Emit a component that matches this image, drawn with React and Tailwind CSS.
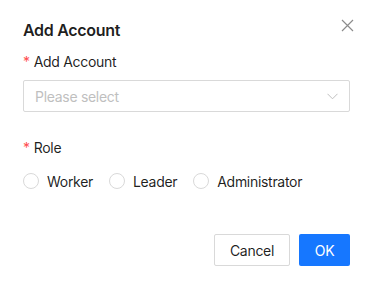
import React from 'react';

const roles = ['Worker', 'Leader', 'Administrator'];

const Label = ({ children }) => (
  <div className="flex items-center h-[22px] text-[14px] text-[rgba(0,0,0,0.88)]">
    <span className="text-[#ff4d4f] mr-[4px] text-[14px] leading-none translate-y-[1px]">*</span>
    {children}
  </div>
);

export default function App() {
  return (
    <div
      className="w-[374px] h-[284px] bg-white pl-[23px] pr-[24px] pt-[18px] tracking-[-0.3px]"
      style={{ fontFamily: 'Inter, "Noto Sans", sans-serif' }}
    >
      {/* Header */}
      <div className="flex items-center justify-between h-[24px]">
        <h2 className="text-[16px] font-semibold leading-[24px] text-[rgba(0,0,0,0.88)]">Add Account</h2>
        <button className="w-[22px] h-[22px] flex items-center justify-center -mr-[8px] -mt-[10px] text-[rgba(0,0,0,0.45)]">
          <svg width="13" height="13" viewBox="0 0 13 13" fill="none" stroke="currentColor" strokeWidth="1.2">
            <path d="M1 1L12 12M12 1L1 12" />
          </svg>
        </button>
      </div>

      {/* Account field */}
      <div className="mt-[8px]">
        <Label>Add Account</Label>
        <div className="mt-[8px] h-[32px] border border-[#d9d9d9] rounded-[2px] flex items-center justify-between px-[11px]">
          <span className="text-[14px] text-[#bfbfbf]">Please select</span>
          <svg width="11" height="7" viewBox="0 0 11 7" fill="none" stroke="#bfbfbf" strokeWidth="1">
            <path d="M0.5 0.8L5.5 5.8L10.5 0.8" />
          </svg>
        </div>
      </div>

      {/* Role field */}
      <div className="mt-[24px]">
        <Label>Role</Label>
        <div className="mt-[12px] flex items-center h-[22px]">
          {roles.map((r) => (
            <label key={r} className="flex items-center mr-[8px]">
              <span className="w-[16px] h-[16px] rounded-full border border-[#d9d9d9] bg-white" />
              <span className="px-[8px] text-[14px] text-[rgba(0,0,0,0.88)]">{r}</span>
            </label>
          ))}
        </div>
      </div>

      {/* Footer */}
      <div className="mt-[42px] flex justify-end gap-[9px]">
        <button className="h-[32px] w-[76px] border border-[#d9d9d9] rounded-[2px] text-[14px] text-[rgba(0,0,0,0.88)] bg-white">
          Cancel
        </button>
        <button className="h-[32px] w-[51px] rounded-[2px] text-[14px] text-white bg-[#1677ff]">
          OK
        </button>
      </div>
    </div>
  );
}
